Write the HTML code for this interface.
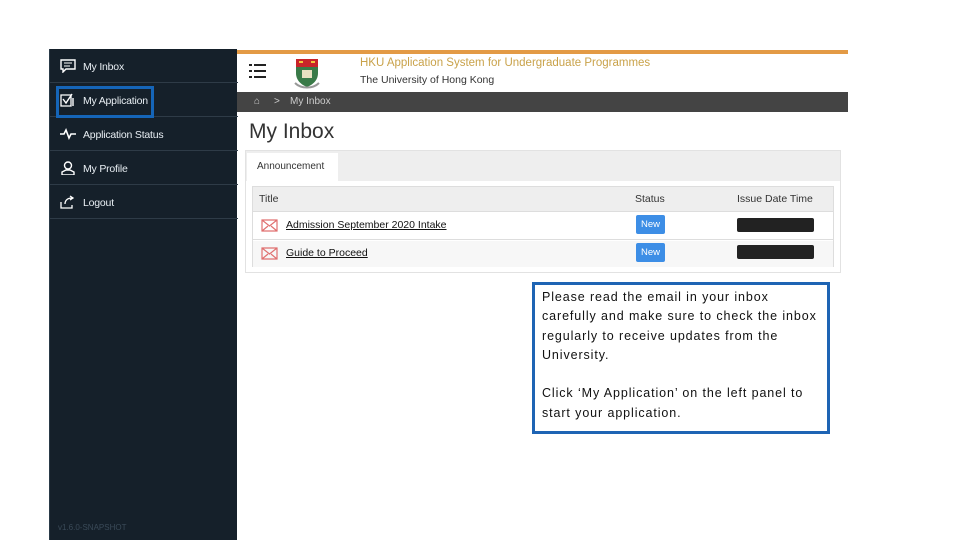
<!DOCTYPE html>
<html><head><style>
*{margin:0;padding:0;box-sizing:border-box}
body{width:960px;height:540px;background:#fff;position:relative;overflow:hidden;font-family:"Liberation Sans",sans-serif}
.a{position:absolute}
#sb{left:49px;top:49px;width:188px;height:491px;background:#15202a;border-left:1px solid #2a3a48}
.it{position:absolute;left:0;width:188px;height:34px;border-bottom:1px solid #2e3b47;color:#e8eef3;font-size:10.5px;line-height:36px;padding-left:33px;letter-spacing:-0.2px}
.ic{position:absolute;left:10px;top:10px;width:16px;height:14px}
</style></head><body>
<div id="sb" class="a">
 <div class="it" style="top:0">My Inbox<svg class="ic" viewBox="0 0 16 14"><path d="M1 1h14v9H6l-3 3v-3H1z" fill="none" stroke="#fff" stroke-width="1.4"/><path d="M4 4h8M4 7h6" stroke="#fff"/></svg></div>
 <div class="it" style="top:34px">My Application<svg class="ic" viewBox="0 0 16 14"><path d="M1 2h10v11H1z" fill="none" stroke="#fff" stroke-width="1.3"/><path d="M3 6l3 4 6-9M13 5v8" fill="none" stroke="#fff" stroke-width="1.4"/></svg></div>
 <div class="a" style="left:6px;top:37px;width:98px;height:32px;border:3px solid #1565b8"></div>
 <div class="it" style="top:68px">Application Status<svg class="ic" viewBox="0 0 16 14"><path d="M0 7h4l2-4 3 8 2-4h5" fill="none" stroke="#fff" stroke-width="1.6"/></svg></div>
 <div class="it" style="top:102px">My Profile<svg class="ic" viewBox="0 0 16 14"><circle cx="8" cy="4.5" r="3.5" fill="none" stroke="#fff" stroke-width="1.4"/><path d="M2 14v-3l4-2h4l4 2v3z" fill="none" stroke="#fff" stroke-width="1.4"/></svg></div>
 <div class="it" style="top:136px">Logout<svg class="ic" viewBox="0 0 16 14"><path d="M1 7v6h11v-3" fill="none" stroke="#fff" stroke-width="1.3"/><path d="M5 9c0-4 3-6 7-6M10 1l3 2-3 2" fill="none" stroke="#fff" stroke-width="1.3"/></svg></div>
 <div class="a" style="left:8px;bottom:8px;color:#3a4a58;font-size:8px">v1.6.0-SNAPSHOT</div>
</div>
<div class="a" style="left:237px;top:50px;width:611px;height:4px;background:#e39a45"></div>
<div class="a" style="left:249px;top:63px;width:17px;height:16px">
 <div class="a" style="left:0;top:1px;width:3px;height:2px;background:#222"></div><div class="a" style="left:5px;top:1px;width:12px;height:2px;background:#222"></div>
 <div class="a" style="left:0;top:7px;width:3px;height:2px;background:#222"></div><div class="a" style="left:5px;top:7px;width:12px;height:2px;background:#222"></div>
 <div class="a" style="left:0;top:13px;width:3px;height:2px;background:#222"></div><div class="a" style="left:5px;top:13px;width:12px;height:2px;background:#222"></div>
</div>
<svg class="a" style="left:293px;top:57px" width="28" height="32" viewBox="0 0 28 32"><path d="M3 2h22v14c0 8-6 12-11 14C9 28 3 24 3 16z" fill="#3a7a48"/><rect x="3" y="2" width="22" height="8" fill="#c8242a"/><path d="M6 5h4M18 5h4" stroke="#f3c53a" stroke-width="2"/><rect x="9" y="13" width="10" height="8" fill="#e8e0c0"/><path d="M2 26c6 6 18 6 24 0" stroke="#999" stroke-width="2" fill="none"/></svg>
<div class="a" style="left:360px;top:57px;font-size:11.5px;color:#c9a24a">HKU Application System for Undergraduate Programmes</div>
<div class="a" style="left:360px;top:74px;font-size:10.5px;color:#333">The University of Hong Kong</div>
<div class="a" style="left:237px;top:92px;width:611px;height:20px;background:#444;color:#ccc;font-size:10px;line-height:20px">
 <span class="a" style="left:17px">⌂</span><span class="a" style="left:37px">&gt;</span><span class="a" style="left:53px">My Inbox</span></div>
<div class="a" style="left:249px;top:120px;font-size:21px;color:#333">My Inbox</div>
<div class="a" style="left:245px;top:150px;width:596px;height:123px;background:#eee;border:1px solid #e2e2e2"></div>
<div class="a" style="left:247px;top:153px;width:91px;height:28px;background:#fff;font-size:10px;color:#333;line-height:28px;padding-left:10px">Announcement</div>
<div class="a" style="left:246px;top:181px;width:594px;height:91px;background:#fff"></div>
<div class="a" style="left:252px;top:186px;width:582px;height:81px;border:1px solid #ddd;font-size:10.5px;color:#333">
 <div class="a" style="left:0;top:0;width:580px;height:25px;background:#eee;border-bottom:1px solid #ddd;line-height:25px">
  <span class="a" style="left:6px">Title</span><span class="a" style="left:382px">Status</span><span class="a" style="left:484px">Issue Date Time</span></div>
 <div class="a" style="left:0;top:26px;width:580px;height:27px;border-bottom:1px solid #ddd"></div>
 <div class="a" style="left:0;top:54px;width:580px;height:26px;background:#f7f7f7"></div>
</div>
<svg class="a" style="left:261px;top:219px" width="17" height="13"><path d="M1 1h15v11H1zM1 1l7.5 6L16 1M1 12l6-5M16 12l-6-5" fill="none" stroke="#e07070" stroke-width="1.2"/></svg>
<svg class="a" style="left:261px;top:247px" width="17" height="13"><path d="M1 1h15v11H1zM1 1l7.5 6L16 1M1 12l6-5M16 12l-6-5" fill="none" stroke="#e07070" stroke-width="1.2"/></svg>
<div class="a" style="left:286px;top:219px;font-size:10.5px;color:#111;text-decoration:underline">Admission September 2020 Intake</div>
<div class="a" style="left:286px;top:247px;font-size:10.5px;color:#111;text-decoration:underline">Guide to Proceed</div>
<div class="a" style="left:636px;top:215px;width:29px;height:19px;background:#3d8ee6;color:#fff;font-size:9.5px;line-height:19px;text-align:center;border-radius:2px">New</div>
<div class="a" style="left:636px;top:243px;width:29px;height:19px;background:#3d8ee6;color:#fff;font-size:9.5px;line-height:19px;text-align:center;border-radius:2px">New</div>
<div class="a" style="left:737px;top:218px;width:77px;height:14px;background:#222;border-radius:2px"></div>
<div class="a" style="left:737px;top:245px;width:77px;height:14px;background:#222;border-radius:2px"></div>
<div class="a" style="left:532px;top:282px;width:298px;height:152px;border:3px solid #1e64b4;background:#fff;padding:3px 7px;font-size:12.5px;line-height:19.3px;color:#111;letter-spacing:0.9px;white-space:nowrap;overflow:hidden">
Please read the email in your inbox<br>carefully and make sure to check the inbox<br>regularly to receive updates from the<br>University.<br><br>Click ‘My Application’ on the left panel to<br>start your application.</div>
</body></html>
